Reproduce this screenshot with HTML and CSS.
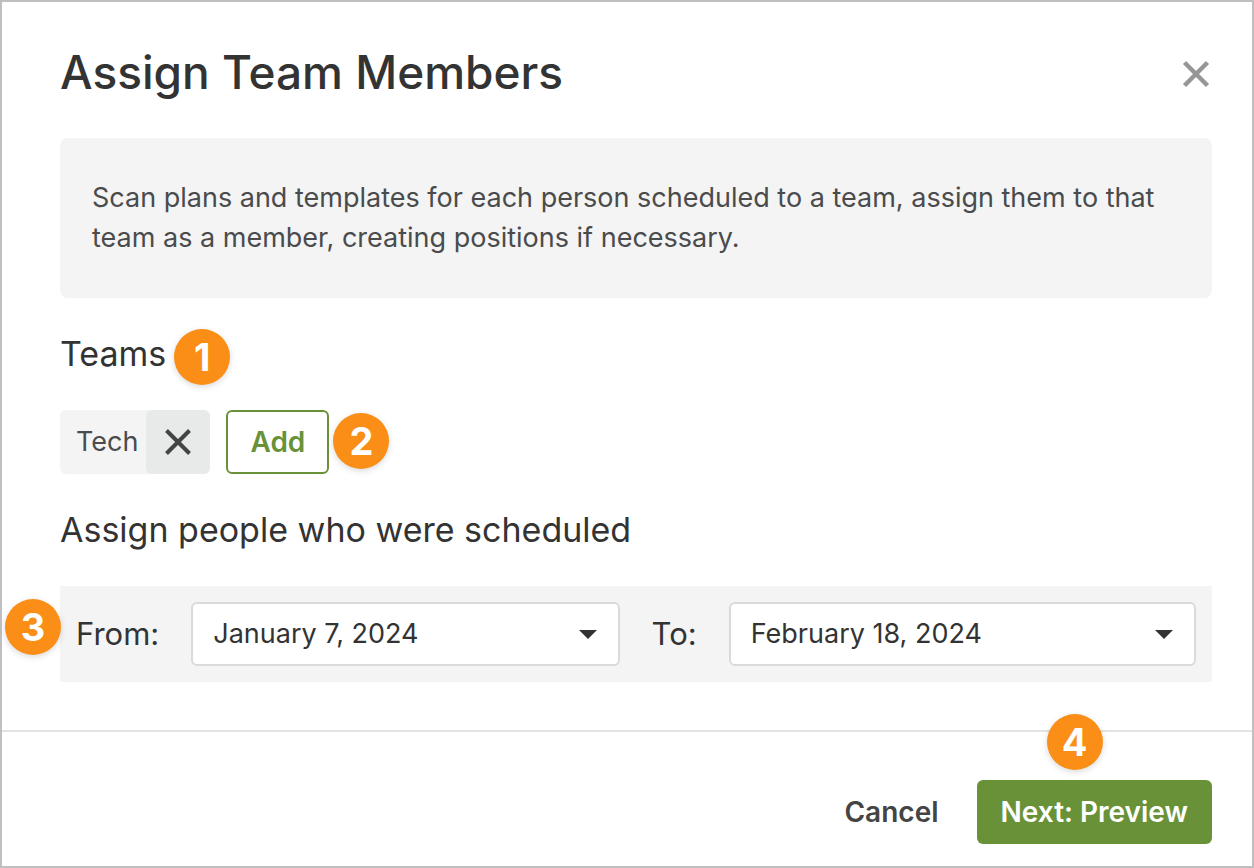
FILE: index.html
```html
<!DOCTYPE html>
<html lang="en">
<head>
  <meta charset="UTF-8">
  <title>Assign Team Members</title>
  <meta name="viewport" content="width=device-width, initial-scale=1" />
  <link rel="stylesheet" href="styles.css">
</head>
<body>

  <div class="modal" role="dialog" aria-labelledby="modal-title">
    <header class="modal-header">
      <h1 id="modal-title">Assign Team Members</h1>
      <button type="button" class="close" aria-label="Close">
        <svg width="28" height="28" viewBox="0 0 28 28"><path d="M2.5 2.5 25.5 25.5M25.5 2.5 2.5 25.5" /></svg>
      </button>
    </header>

    <main class="modal-body">
      <p class="notice">Scan plans and templates for each person scheduled to a team, assign them to that team as a member, creating positions if necessary.</p>

      <h2 class="section-title">
        <span class="marked">Teams<span class="badge badge-teams">1</span></span>
      </h2>

      <div class="teams">
        <div class="chip">
          <span class="chip-label">Tech</span>
          <button type="button" class="chip-remove" aria-label="Remove Tech">
            <svg width="28" height="28" viewBox="0 0 28 28"><path d="M2.5 2.5 25.5 25.5M25.5 2.5 2.5 25.5" /></svg>
          </button>
        </div>
        <div class="marked">
          <button type="button" class="btn btn-outline">Add</button>
          <span class="badge badge-add">2</span>
        </div>
      </div>

      <h2 class="section-title">Assign people who were scheduled</h2>

      <div class="dates marked">
        <span class="badge badge-dates">3</span>
        <label for="from">From:</label>
        <div class="select select-from">
          <select id="from">
            <option>January 7, 2024</option>
          </select>
          <svg class="caret" width="18" height="9" viewBox="0 0 18 9"><path d="M0 0h18L9 9z" /></svg>
        </div>
        <label for="to">To:</label>
        <div class="select select-to">
          <select id="to">
            <option>February 18, 2024</option>
          </select>
          <svg class="caret" width="18" height="9" viewBox="0 0 18 9"><path d="M0 0h18L9 9z" /></svg>
        </div>
      </div>
    </main>

    <footer class="modal-footer">
      <button type="button" class="btn btn-text">Cancel</button>
      <div class="marked">
        <button type="button" class="btn btn-primary">Next: Preview</button>
        <span class="badge badge-next">4</span>
      </div>
    </footer>
  </div>

</body>
</html>
```
FILE: styles.css
```css
*, *:before, *:after {
  box-sizing: border-box;
}
body {
  margin: 0;
  background-color: #fff;
  color: #333;
  font-family: Inter, "Liberation Sans", sans-serif;
  font-size: 27px;
  line-height: 40px;
}
h1, h2, p {
  margin: 0;
}
button, select {
  font: inherit;
  color: inherit;
  cursor: pointer;
}

.modal {
  display: flex;
  flex-direction: column;
  min-height: 100vh;
  border: 2px solid #bfbfbf;
}
.modal-header {
  display: flex;
  align-items: center;
  justify-content: space-between;
  padding: 40px 40px 36px 58px;
}
.modal-header h1 {
  font-size: 46px;
  line-height: 60px;
  font-weight: 500;
}
.close {
  display: flex;
  padding: 6px 2px 2px;
  border: 0;
  background: none;
}
.close svg {
  stroke: #949698;
  stroke-width: 4.5;
}

.modal-body {
  flex: 1;
  padding: 0 40px 48px 58px;
}
.notice {
  padding: 40px 32px;
  border-radius: 8px;
  background-color: #f4f4f4;
  color: #4a4b4c;
}
.section-title {
  padding: 32px 0;
  font-size: 34px;
  line-height: 48px;
  font-weight: 400;
}

.teams {
  display: flex;
  gap: 16px;
}
.chip {
  display: flex;
  height: 64px;
  border-radius: 6px;
  background-color: #f4f4f4;
  color: #4a4b4c;
}
.chip-label {
  padding: 12px 8px 12px 16px;
}
.chip-remove {
  display: flex;
  align-items: center;
  justify-content: center;
  width: 64px;
  padding: 0;
  border: 0;
  border-radius: 6px;
  background-color: #e8eaea;
}
.chip-remove svg {
  stroke: #444;
  stroke-width: 4;
}

.btn {
  height: 64px;
  padding: 0 22px;
  border: 2px solid transparent;
  border-radius: 6px;
  background: none;
  font-size: 28px;
  font-weight: 600;
}
.btn-outline {
  border-color: #699238;
  color: #699238;
}
.btn-primary {
  padding: 0 24px;
  border: 0;
  background-color: #699238;
  color: #fff;
}
.btn-text {
  padding: 0 16px;
  color: #444;
}

.dates {
  display: flex;
  align-items: center;
  gap: 32px;
  padding: 16px;
  background-color: #f4f4f4;
}
.dates label {
  font-size: 31px;
}
.select {
  display: flex;
  align-items: center;
  position: relative;
}
.select-from {
  flex: 11 1 0;
}
.select-to {
  flex: 12 1 0;
}
.select select {
  appearance: none;
  width: 100%;
  height: 64px;
  padding: 0 48px 0 20px;
  border: 2px solid #dadada;
  border-radius: 6px;
  background-color: #fff;
}
.caret {
  position: absolute;
  right: 23px;
  fill: #333;
  pointer-events: none;
}

.modal-footer {
  display: flex;
  justify-content: flex-end;
  gap: 20px;
  padding: 48px 40px 22px;
  border-top: 2px solid #e3e3e3;
}

/* numbered callouts */
.marked {
  position: relative;
}
.badge {
  position: absolute;
  width: 56px;
  height: 56px;
  border-radius: 50%;
  background-color: #fa8e16;
  box-shadow: 0 2px 6px rgba(0,0,0,0.15);
  color: #fff;
  font-size: 38px;
  line-height: 56px;
  font-weight: 700;
  text-align: center;
}
.badge-teams {
  top: -4px;
  left: calc(100% + 8px);
}
.badge-add {
  top: 3px;
  left: calc(100% + 4px);
}
.badge-dates {
  top: 13px;
  left: -55px;
}
.badge-next {
  bottom: calc(100% + 10px);
  left: 70px;
}
```
